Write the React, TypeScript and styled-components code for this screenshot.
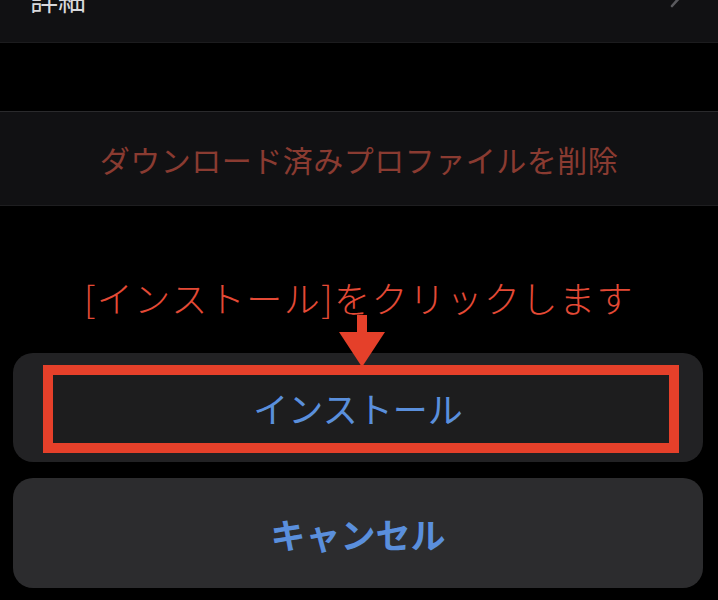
import React from "react";
import styled, { createGlobalStyle } from "styled-components";

const Global = createGlobalStyle`
  html, body {
    margin: 0;
    padding: 0;
    background: #000;
  }
  body {
    font-family: "Noto Sans CJK JP", "Noto Sans", sans-serif;
    width: 718px;
    height: 600px;
    overflow: hidden;
  }
`;

const Page = styled.div`
  width: 718px;
  height: 600px;
  display: flex;
  flex-direction: column;
  background: #000;
`;

const TopRow = styled.div`
  height: 43px;
  background: #111113;
  border-bottom: 1px solid #1c1c1e;
  display: flex;
  align-items: flex-end;
  justify-content: space-between;
  padding: 0 34px 29px 30px;
  box-sizing: border-box;
  overflow: hidden;
`;

const RowLabel = styled.span`
  font-size: 28px;
  line-height: 1;
  color: #d8d8dc;
`;

const Chevron = styled.svg`
  width: 14px;
  height: 24px;
  margin-bottom: 5px;
  flex: none;
`;

const DeleteRow = styled.div`
  margin-top: 68px;
  height: 95px;
  box-sizing: border-box;
  background: #111113;
  border-top: 1px solid #2a2a2c;
  border-bottom: 1px solid #1e1e20;
  display: flex;
  align-items: center;
  justify-content: center;
`;

const DeleteText = styled.span`
  font-size: 30px;
  line-height: 1;
  color: #8a3b31;
  letter-spacing: 0.5px;
`;

const Annotation = styled.div`
  margin-top: 73px;
  font-size: 36px;
  font-weight: 300;
  line-height: 1;
  color: #e44a36;
  text-align: center;
  letter-spacing: 1.5px;
`;

const Card = styled.div<{ $bg: string }>`
  position: relative;
  margin: 0 15px 0 13px;
  border-radius: 20px;
  background: ${(p) => p.$bg};
  display: flex;
  align-items: center;
  justify-content: center;
`;

const InstallCard = styled(Card)`
  margin-top: 38px;
  height: 109px;
`;

const CancelCard = styled(Card)`
  margin-top: 16px;
  height: 110px;
`;

const ActionText = styled.span<{ $bold?: boolean }>`
  position: relative;
  z-index: 1;
  font-size: 35px;
  line-height: 1;
  color: #5a8fdc;
  font-weight: ${(p) => (p.$bold ? 700 : 400)};
`;

const Highlight = styled.div`
  position: absolute;
  left: 30px;
  top: 12px;
  right: 24px;
  bottom: 9px;
  border: 10px solid #e5402a;
  background: #1d1d1e;
`;

const Arrow = styled.svg`
  position: absolute;
  left: 326px;
  top: -38px;
  width: 46px;
  height: 52px;
  z-index: 2;
`;

export default function App() {
  return (
    <>
      <Global />
      <Page>
        <TopRow>
          <RowLabel>詳細</RowLabel>
          <Chevron viewBox="0 0 14 24">
            <path d="M2 2 L11 12 L2 22" fill="none" stroke="#5a5a5e" strokeWidth="2.6" strokeLinecap="round" strokeLinejoin="round" />
          </Chevron>
        </TopRow>
        <DeleteRow>
          <DeleteText>ダウンロード済みプロファイルを削除</DeleteText>
        </DeleteRow>
        <Annotation>[インストール]をクリックします</Annotation>
        <InstallCard $bg="#222224">
          <Highlight />
          <Arrow viewBox="0 0 46 52">
            <rect x="18" y="0" width="10" height="18" fill="#e5402a" />
            <polygon points="0,17 46,17 23,52" fill="#e5402a" />
          </Arrow>
          <ActionText>インストール</ActionText>
        </InstallCard>
        <CancelCard $bg="#2c2c2e">
          <ActionText $bold>キャンセル</ActionText>
        </CancelCard>
      </Page>
    </>
  );
}
